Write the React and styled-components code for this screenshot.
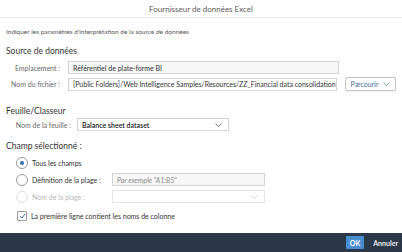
import React from "react";
import styled, { createGlobalStyle } from "styled-components";

const GlobalStyle = createGlobalStyle`
  html, body {
    margin: 0;
    padding: 0;
    background: #ffffff;
  }
  body {
    font-family: Lato, "Open Sans", sans-serif;
    color: #333;
  }
`;

const Dialog = styled.div`
  width: 402px;
  height: 252px;
  display: flex;
  flex-direction: column;
  background: #fff;
  overflow: hidden;
`;

const TitleBar = styled.div`
  height: 17px;
  flex: none;
  display: flex;
  align-items: center;
  justify-content: center;
  font-size: 8px;
  color: #5b5b5b;
  border-bottom: 1px solid #ececec;
  box-shadow: 0 1px 1px rgba(0, 0, 0, 0.03);
`;

const Body = styled.div`
  flex: 1;
  padding: 9px 6px 0 6px;
  display: flex;
  flex-direction: column;
`;

const Intro = styled.div`
  font-size: 6.5px;
  color: #555;
  line-height: 10px;
`;

const SectionTitle = styled.div`
  font-size: 8.5px;
  color: #333;
  line-height: 11px;
  margin-top: ${(p) => p.$top}px;
`;

const FormRow = styled.div`
  display: flex;
  align-items: center;
  margin-top: ${(p) => p.$top}px;
`;

const Label = styled.div`
  width: ${(p) => p.$width}px;
  flex: none;
  box-sizing: border-box;
  text-align: right;
  font-size: 7px;
  color: #6a6a6a;
  padding-right: ${(p) => p.$gap}px;
  white-space: nowrap;
`;

const TextBox = styled.div`
  width: ${(p) => p.$width}px;
  height: 13px;
  flex: none;
  box-sizing: border-box;
  border: 1px solid ${(p) => (p.$light ? "#e6e6e6" : "#d4d4d4")};
  background: ${(p) => (p.$grey ? "#f7f7f7" : "#ffffff")};
  display: flex;
  align-items: center;
  padding: 0 4px;
  font-size: 7px;
  color: #333;
  overflow: hidden;
  white-space: nowrap;
`;

const Placeholder = styled.span`
  font-style: italic;
  color: #8d8d8d;
`;

const SelectBox = styled(TextBox)`
  justify-content: space-between;
  padding: 0 6px 0 4px;
  font-weight: ${(p) => (p.$bold ? 600 : 400)};
  color: #222;
`;

const BrowseButton = styled.button`
  margin-left: 8px;
  height: 14px;
  width: 51px;
  flex: none;
  box-sizing: border-box;
  border: 1px solid #c4c4c4;
  border-radius: 2px;
  background: #fff;
  color: #3b6a9a;
  font-family: inherit;
  font-size: 7px;
  display: flex;
  align-items: center;
  justify-content: center;
  gap: 5px;
  padding: 0;
  box-shadow: 0 1px 1px rgba(0, 0, 0, 0.06);
`;

const OptionRow = styled.div`
  display: flex;
  align-items: center;
  margin-top: ${(p) => p.$top}px;
  padding-left: ${(p) => p.$indent}px;
  font-size: 7px;
  color: ${(p) => (p.$disabled ? "#b8b8b8" : "#333")};
`;

const Radio = styled.span`
  width: 10px;
  height: 10px;
  flex: none;
  border-radius: 50%;
  border: 1px solid ${(p) => (p.$disabled ? "#dedede" : "#9a9a9a")};
  display: flex;
  align-items: center;
  justify-content: center;
  margin-right: 4px;
  &::after {
    content: "";
    width: 4px;
    height: 4px;
    border-radius: 50%;
    background: ${(p) => (p.$checked ? "#2f6fb3" : "transparent")};
  }
`;

const RadioLabel = styled.span`
  width: ${(p) => p.$width}px;
  flex: none;
  white-space: nowrap;
`;

const Check = styled.span`
  width: 8px;
  height: 8px;
  flex: none;
  border: 1px solid #9a9a9a;
  border-radius: 1px;
  display: flex;
  align-items: center;
  justify-content: center;
  margin-right: 4px;
`;

const Footer = styled.div`
  height: 19px;
  flex: none;
  background: #2b3847;
  display: flex;
  align-items: center;
  justify-content: flex-end;
  padding-right: 4px;
  gap: 9px;
`;

const OkButton = styled.button`
  height: 13px;
  padding: 0 4px;
  border: none;
  border-radius: 1px;
  background: #4a8ed2;
  color: #fff;
  font-family: inherit;
  font-size: 7px;
  font-weight: 700;
`;

const CancelButton = styled.button`
  border: none;
  background: transparent;
  padding: 0;
  color: #e8ecf0;
  font-family: inherit;
  font-size: 7px;
  font-weight: 700;
`;

const Chevron = ({ color = "#6f8fb0" }) => (
  <svg width="7" height="4" viewBox="0 0 7 4">
    <polyline points="0.5,0.5 3.5,3.5 6.5,0.5" fill="none" stroke={color} strokeWidth="0.8" />
  </svg>
);

const Tick = () => (
  <svg width="7" height="6" viewBox="0 0 7 6">
    <polyline points="1,3 3,5 6,1" fill="none" stroke="#2f6fb3" strokeWidth="1" />
  </svg>
);

export default function App() {
  return (
    <>
      <GlobalStyle />
      <Dialog>
        <TitleBar>Fournisseur de données Excel</TitleBar>
        <Body>
          <Intro>Indiquer les paramètres d'interprétation de la source de données</Intro>

          <SectionTitle $top={9}>Source de données</SectionTitle>
          <FormRow $top={4}>
            <Label $width={62} $gap={8}>Emplacement :</Label>
            <TextBox $width={271} $grey>Référentiel de plate-forme BI</TextBox>
          </FormRow>
          <FormRow $top={3}>
            <Label $width={62} $gap={8}>Nom du fichier :</Label>
            <TextBox $width={269}>
              [Public Folders]/Web Intelligence Samples/Resources/ZZ_Financial data consolidation.xlsx
            </TextBox>
            <BrowseButton>
              Parcourir <Chevron />
            </BrowseButton>
          </FormRow>

          <SectionTitle $top={15}>Feuille/Classeur</SectionTitle>
          <FormRow $top={1}>
            <Label $width={71} $gap={6}>Nom de la feuille :</Label>
            <SelectBox $width={152} $bold>
              Balance sheet dataset <Chevron color="#555" />
            </SelectBox>
          </FormRow>

          <SectionTitle $top={10}>Champ sélectionné :</SectionTitle>
          <OptionRow $top={5} $indent={10}>
            <Radio $checked />
            <RadioLabel>Tous les champs</RadioLabel>
          </OptionRow>
          <OptionRow $top={4} $indent={10}>
            <Radio />
            <RadioLabel $width={80}>Définition de la plage :</RadioLabel>
            <TextBox $width={153} $grey>
              <Placeholder>Par exemple "A1:B5"</Placeholder>
            </TextBox>
          </OptionRow>
          <OptionRow $top={4} $indent={10} $disabled>
            <Radio $disabled />
            <RadioLabel $width={80}>Nom de la plage :</RadioLabel>
            <SelectBox $width={153} $light>
              <span />
              <Chevron color="#c4cfdb" />
            </SelectBox>
          </OptionRow>
          <OptionRow $top={8} $indent={11}>
            <Check>
              <Tick />
            </Check>
            <span>La première ligne contient les noms de colonne</span>
          </OptionRow>
        </Body>
        <Footer>
          <OkButton>OK</OkButton>
          <CancelButton>Annuler</CancelButton>
        </Footer>
      </Dialog>
    </>
  );
}
